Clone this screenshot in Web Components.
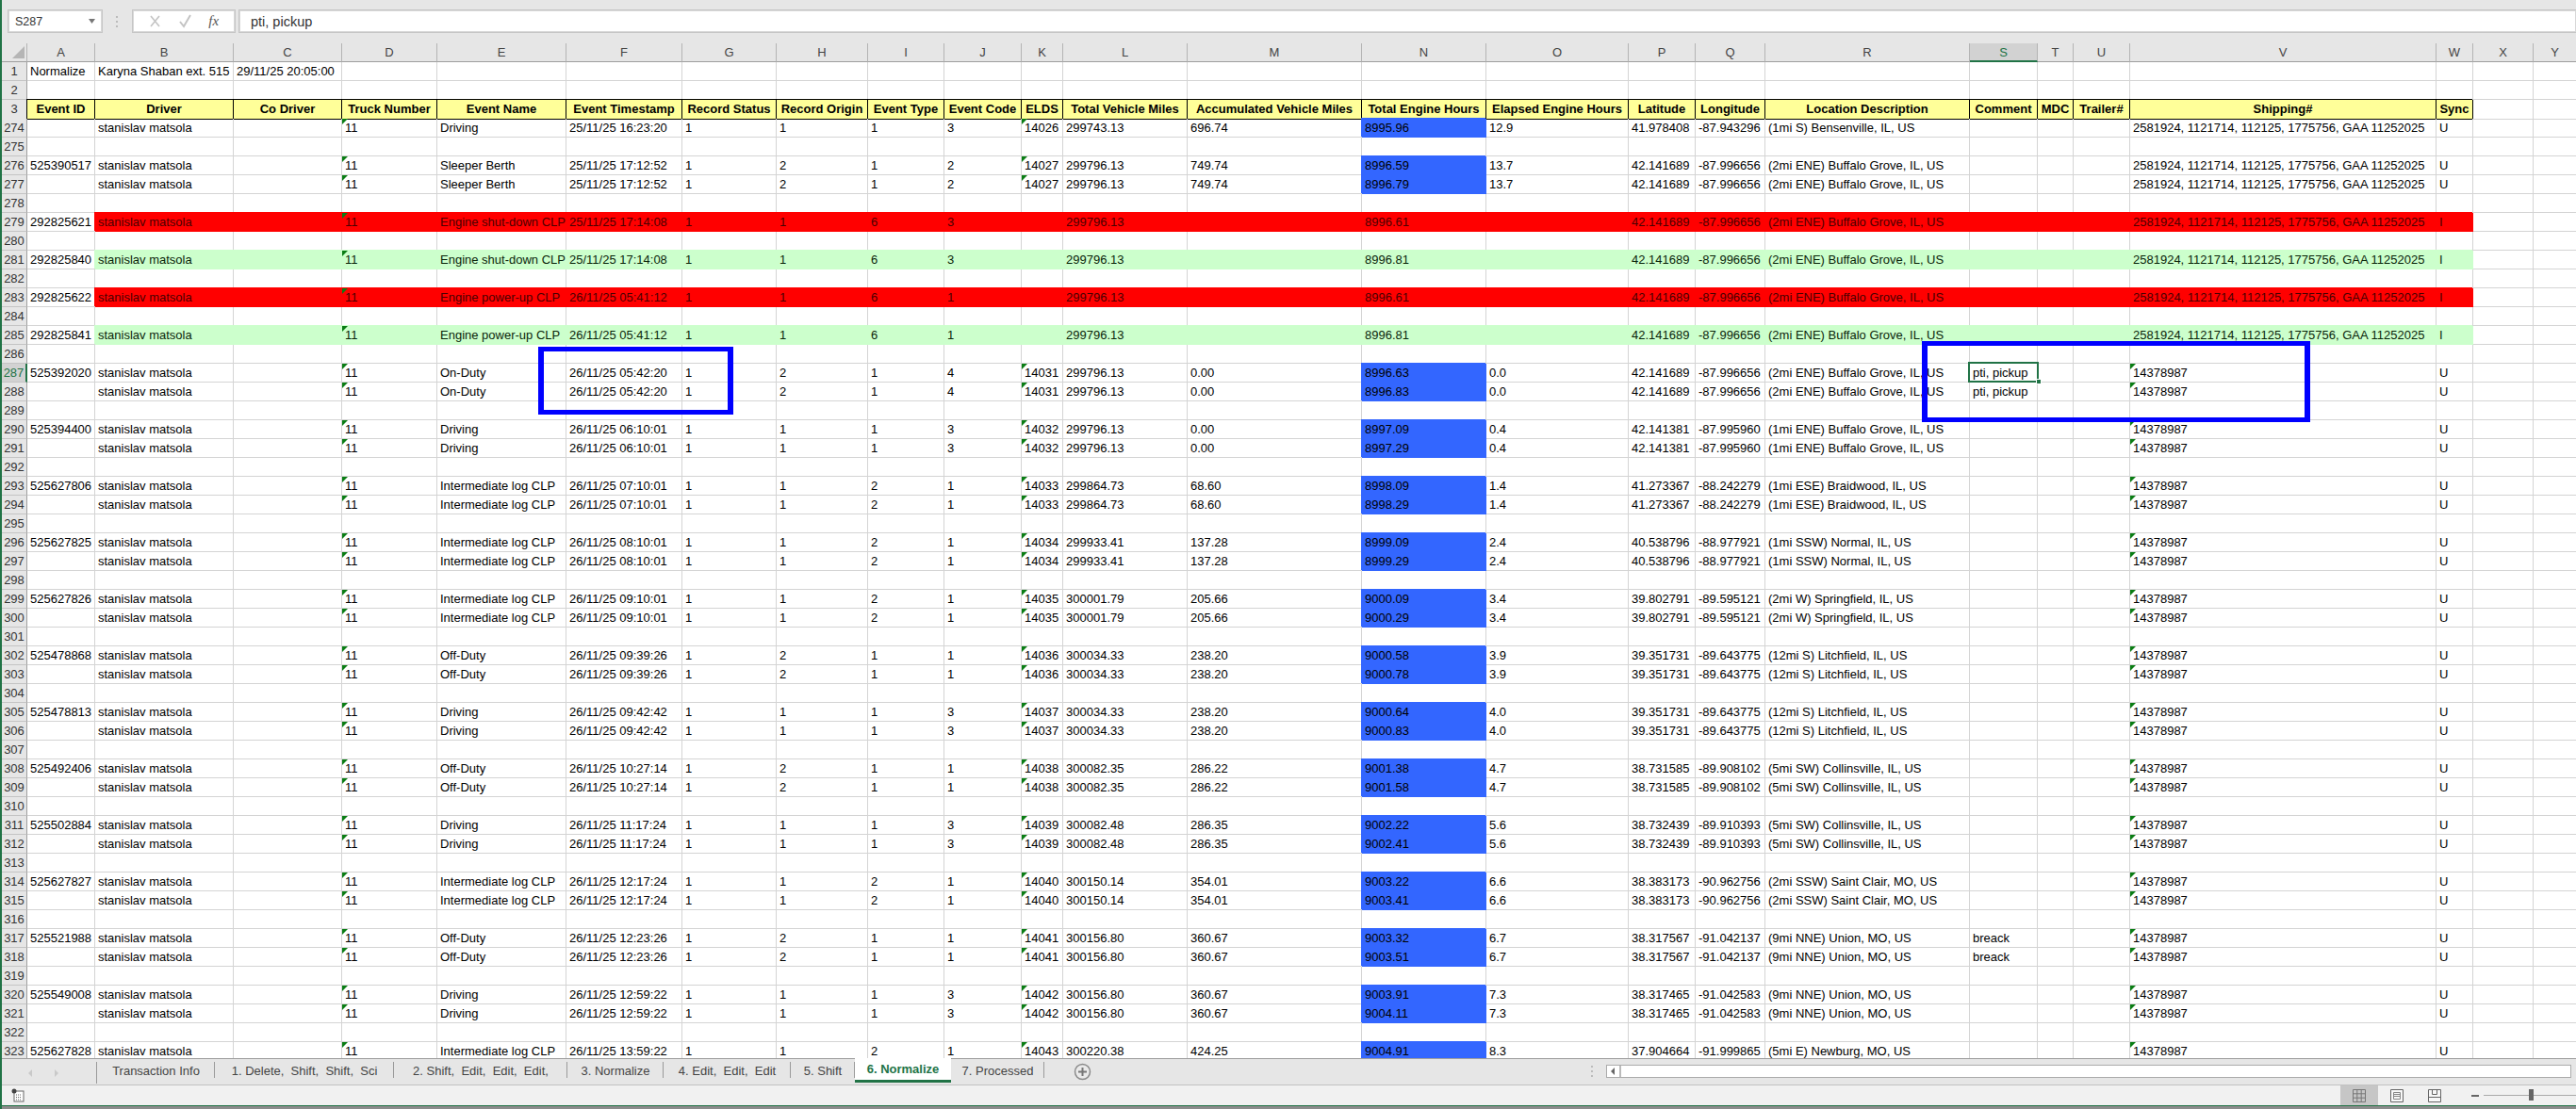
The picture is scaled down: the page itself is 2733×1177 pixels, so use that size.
<!DOCTYPE html>
<html><head><meta charset="utf-8"><title>Normalize</title>
<style>
html,body{margin:0;padding:0;background:#fff;overflow:hidden}
body{font-family:"Liberation Sans",Arial,sans-serif;font-size:13px;color:#000;
--cols:27px 72px 147px 115px 101px 137px 123px 100px 97px 81px 82px 44px 132px 185px 132px 151px 71px 74px 217px 72px 38px 60px 325px 39px 64px 46px;}
</style></head><body>
<x-app>
<x-formula-bar slot="top" name="S287" value="pti, pickup"></x-formula-bar>
<x-sheet slot="sheet" id="sheet">
  <x-mark style="left:569px;top:322px;width:195px;height:62px"></x-mark>
  <x-mark style="left:2037px;top:316px;width:400px;height:76px"></x-mark>
</x-sheet>
<x-tabbar slot="tabs">
  <x-tab w="125">Transaction Info</x-tab>
  <x-tab w="190">1. Delete,  Shift,  Shift,  Sci</x-tab>
  <x-tab w="184">2. Shift,  Edit,  Edit,  Edit,</x-tab>
  <x-tab w="102">3. Normalize</x-tab>
  <x-tab w="135">4. Edit,  Edit,  Edit</x-tab>
  <x-tab w="68">5. Shift</x-tab>
  <x-tab w="102" active>6. Normalize</x-tab>
  <x-tab w="99">7. Processed</x-tab>
</x-tabbar>
<x-statusbar slot="status"></x-statusbar>
</x-app>
<script>
function def(name,css,html,extra){
  const C=class extends HTMLElement{
    constructor(){super();const r=this.attachShadow({mode:'open'});r.innerHTML='<style>'+css+'</style>'+html;}
  };
  if(extra)extra(C);
  customElements.define(name,C);
}
def('x-app',`:host{display:flex;flex-direction:column;width:2733px;height:1177px;box-sizing:border-box;border-left:2px solid #217346;background:#e6e6e6;overflow:hidden}
.g{height:1px;background:#217346;flex:none}.b{height:3px;background:#8c8c8c;flex:none}`,
`<slot name="top"></slot><slot name="sheet"></slot><slot name="tabs"></slot><slot name="status"></slot><div class="g"></div><div class="b"></div>`);

customElements.define('x-formula-bar',class extends HTMLElement{
  connectedCallback(){
    const r=this.attachShadow({mode:'open'});
    r.innerHTML=`<style>
    :host{display:flex;height:46px;box-sizing:border-box;padding:10px 0 11px 6px;background:#e6e6e6;align-items:stretch;flex:none;font-family:"Liberation Sans",Arial,sans-serif}
    .box{background:#fff;border:1px solid #c6c6c6;box-shadow:inset 0 0 0 1px #d8d8d8;box-sizing:border-box;display:flex;align-items:center}
    .name{width:101px;padding:0 6px 0 7px;font-size:12.5px;color:#333;justify-content:space-between}
    .dots{width:31px;display:flex;align-items:center;justify-content:center}
    .fn{width:110px;justify-content:space-around;padding:0 8px;}
    .fx{font:italic 15px "Liberation Serif",serif;color:#555}
    .val{flex:1;margin-left:3px;border-right:none;padding-left:12px;font-size:14.5px;color:#333}
    </style>
    <div class="box name"><span>${this.getAttribute('name')}</span><svg width="8" height="6"><path d="M0 0h7L3.500 5z" fill="#777"/></svg></div>
    <div class="dots"><svg width="3" height="13"><g fill="#bbb"><rect width="2" height="2" y="1"/><rect width="2" height="2" y="6"/><rect width="2" height="2" y="11"/></g></svg></div>
    <div class="box fn"><svg width="13" height="15"><path d="M2 2l9 11M11 2L2 13" stroke="#c4c4c4" stroke-width="1.600" fill="none"/></svg><svg width="15" height="15"><path d="M2 8l4 5 7-12" stroke="#c4c4c4" stroke-width="2" fill="none"/></svg><span class="fx">fx</span></div>
    <div class="box val">${this.getAttribute('value')}</div>`;
  }
});

def('x-sheet',`:host{display:block;position:relative;height:1077px;overflow:hidden;background:#fff;flex:none}`,`<slot></slot>`);

def('x-col-head',`:host{display:grid;grid-template-columns:var(--cols);height:20px;background:#e6e6e6;font:13px/20px "Liberation Sans",Arial,sans-serif;color:#444}
div{box-sizing:border-box;text-align:center;border-right:1px solid #b4b4b4;border-bottom:1px solid #9e9e9e;overflow:hidden}
.c{background:#e6e6e6}
.c0{position:relative}
.c0 svg{position:absolute;left:10px;top:2px}
.sel{background:#d2d2d2;color:#217346;border-bottom:2px solid #217346}`,'',C=>{
  const p=C.prototype;
  p.connectedCallback=function(){
    const L='ABCDEFGHIJKLMNOPQRSTUVWXY'.split('');
    let h='<div class="c0"><svg width="15" height="15"><path d="M14 1v13H1z" fill="#b5b5b5"/></svg></div>';
    L.forEach(l=>h+='<div class="'+(l==='S'?'sel':'')+'">'+l+'</div>');
    const d=document.createElement('template');d.innerHTML=h;this.shadowRoot.appendChild(d.content);
  };
});

const rowCss=`:host{display:grid;grid-template-columns:var(--cols);height:20px;font:13px/19px "Liberation Sans",Arial,sans-serif;color:#000}
.c{box-sizing:border-box;border-right:1px solid #d4d4d4;border-bottom:1px solid #d4d4d4;padding-left:3px;white-space:pre;position:relative;min-width:0}
.rh{background:#e6e6e6;border-right:1px solid #9e9e9e;border-bottom:1px solid #c4c4c4;padding:0;text-align:center;color:#333;line-height:20px;overflow:hidden}
.rh.sel{background:#d2d2d2;color:#217346;border-right:2px solid #217346}
.h{background:#ff9;border-right:1px solid #000;border-bottom:1px solid #000;box-shadow:-1px -1px 0 #000;font-weight:bold;text-align:center;padding:0;line-height:20px}
.red{background:#f00;border-color:#f00;box-shadow:-1px -1px 0 #f00;color:#4a0000}
.grn{background:#cfc;border-color:#cfc;box-shadow:-1px -1px 0 #cfc;color:#0a250a}
.blu{background:#36f;border-color:#36f;box-shadow:-1px -1px 0 #36f}
.t::before{content:"";position:absolute;left:0;top:0;border-top:6px solid #0a7d14;border-right:6px solid transparent}
.cur::after{content:"";position:absolute;left:-2px;top:-2px;width:71px;height:18px;border:2px solid #217346;z-index:2}
.hd{position:absolute;left:70px;top:16px;width:4px;height:4px;background:#217346;border:1px solid #fff;z-index:3}
`;
customElements.define('x-row',class extends HTMLElement{
  constructor(){super();this.attachShadow({mode:'open'});}
  set data(d){
    const cols=25;
    let h='<style>'+rowCss+'</style><div class="c rh'+(d.num===287?' sel':'')+'">'+d.num+'</div>';
    for(let i=0;i<cols;i++){
      const v=(d.v&&d.v[i])||'';
      const cls=['c'];
      if(d.hdr&&i<23)cls.push('h');
      if(d.fill&&i>=1&&i<23)cls.push(d.fill);
      if(d.blue&&i===13)cls.push('blu');
      if(d.tri&&((i===3&&v)||(i===10&&v)||(i===21&&v==='14378987')))cls.push('t');
      if(d.num===287&&i===18)cls.push('cur');
      const hd=(d.num===287&&i===18)?'<span class="hd"></span>':'';
      h+='<div class="'+cls.join(' ')+'">'+v.replace(/&/g,'&amp;')+hd+'</div>';
    }
    this.shadowRoot.innerHTML=h;
  }
});

def('x-mark',`:host{display:block;position:absolute;box-sizing:content-box;border:5px solid #00f;border-width:5px 6px;z-index:5;pointer-events:none}`,'');

customElements.define('x-tab',class extends HTMLElement{
  constructor(){super();this.attachShadow({mode:'open'});}
  connectedCallback(){
    this.shadowRoot.innerHTML=`<style>
    :host{display:flex;flex:none;box-sizing:border-box;width:${this.getAttribute('w')}px;align-items:center;justify-content:center;white-space:pre;font:13px "Liberation Sans",Arial,sans-serif;color:#444;position:relative}
    :host(:not([active]))::after{content:"";position:absolute;right:0;top:3px;bottom:4px;width:1px;background:#9a9a9a}
    :host([active]){background:#fff;color:#217346;font-weight:bold;border-bottom:3px solid #217346;margin-top:-1px;height:26px;}
    </style><slot></slot>`;
  }
});

def('x-tabbar',`:host{display:flex;height:29px;box-sizing:border-box;border-top:1px solid #9e9e9e;border-bottom:1px solid #c2c2c2;background:#e6e6e6;align-items:flex-start;flex:none}
.nav{width:101px;height:23px;box-sizing:border-box;display:flex;align-items:center;gap:22px;padding-left:27px;position:relative;flex:none;margin-top:3px}
.nav::after{content:"";position:absolute;right:0;top:0;bottom:0;width:1px;background:#9a9a9a}
.tabs{display:flex;height:24px;}
.plus{margin:4px 0 0 31px;flex:none}
.dots{margin:6px 14px 0 auto;flex:none}
.sb{flex:none;width:1024px;height:14px;margin:6px 5px 0 0;box-sizing:border-box;border:1px solid #ababab;background:#fff;display:flex}
.sb i{display:flex;width:13px;border-right:2px solid #bbb;align-items:center;justify-content:center}`,
`<div class="nav"><svg width="6" height="10"><path d="M5 1v8L1 5z" fill="#c9c9c9"/></svg><svg width="6" height="10"><path d="M1 1v8l4-4z" fill="#c9c9c9"/></svg></div>
<div class="tabs"><slot></slot></div>
<svg class="plus" width="19" height="19"><circle cx="9.500" cy="9.500" r="8" fill="#eaeaea" stroke="#8a8a8a" stroke-width="1.500"/><path d="M9.500 5v9M5 9.500h9" stroke="#777" stroke-width="2"/></svg>
<svg class="dots" width="2" height="15"><g fill="#bbb"><rect width="2" height="2" y="1"/><rect width="2" height="2" y="6"/><rect width="2" height="2" y="11"/></g></svg>
<div class="sb"><i><svg width="5" height="8"><path d="M4 0v8L0 4z" fill="#666"/></svg></i></div>`);

def('x-statusbar',`:host{display:flex;height:21px;background:#f1f1f1;align-items:center;flex:none;position:relative}
.mac{margin-left:9px;flex:none}
.view{margin-left:auto;display:flex;align-items:center;height:21px}
.v{width:40px;height:21px;display:flex;align-items:center;justify-content:center}
.v.on{background:#c6c6c6}
.minus{width:8px;height:2px;background:#666;margin:0 5px 0 19px}
.track{width:98px;height:1px;background:#aaa;position:relative;flex:none}
.track b{position:absolute;left:48px;top:-6px;width:5px;height:12px;background:#666}`,
`<svg class="mac" width="15" height="15"><rect x="4" y="3" width="10" height="11" fill="#fff" stroke="#666"/><circle cx="4" cy="3" r="2.500" fill="#444"/><path d="M6 7h6M6 9.500h6M6 12h6" stroke="#666" stroke-dasharray="1 1"/></svg>
<div class="view">
<div class="v on"><svg width="14" height="14"><path d="M.5.500h13v13H.5zM.5 4.800h13M.5 9.200h13M4.800.500v13M9.200.500v13" fill="none" stroke="#777"/></svg></div>
<div class="v"><svg width="14" height="14"><path d="M.5.500h13v13H.5z" fill="#f8f8f8" stroke="#666"/><path d="M3.500 3.500h7v7h-7zM4 5.500h6M4 7.500h6" fill="none" stroke="#888"/></svg></div>
<div class="v"><svg width="14" height="14"><path d="M.5.500h13v13H.5z" fill="#f8f8f8" stroke="#666"/><path d="M4.500.500v5h5v-5M.5 8.500h13" fill="none" stroke="#666"/></svg></div>
<div class="minus"></div><div class="track"><b></b></div></div>`);

/* ----- data ----- */
const DR='stanislav matsola';
const SHIP='2581924, 1121714, 112125, 1775756, GAA 11252025', PRO='14378987';
const rows=new Map();
rows.set(1,{v:['Normalize','Karyna Shaban ext. 515','29/11/25 20:05:00']});
rows.set(2,{});
rows.set(3,{hdr:1,v:['Event ID','Driver','Co Driver','Truck Number','Event Name','Event Timestamp','Record Status','Record Origin','Event Type','Event Code','ELDS','Total Vehicle Miles','Accumulated Vehicle Miles','Total Engine Hours','Elapsed Engine Hours','Latitude','Longitude','Location Description','Comment','MDC','Trailer#','Shipping#','Sync']});
function R(num,id,ev,ts,g,h,i,j,k,l,m,n,o,p,q,loc,com,ship,sync,opt){
  rows.set(num,Object.assign({tri:1,blue:!!o,v:[id,DR,'','11',ev,ts,g,h,i,j,k,l,m,n,o,p,q,loc,com,'','',ship,sync]},opt||{}));
}
const BG='(2mi ENE) Buffalo Grove, IL, US';
R(274,'','Driving','25/11/25 16:23:20','1','1','1','3','14026','299743.13','696.74','8995.96','12.9','41.978408','-87.943296','(1mi S) Bensenville, IL, US','',SHIP,'U');
R(276,'525390517','Sleeper Berth','25/11/25 17:12:52','1','2','1','2','14027','299796.13','749.74','8996.59','13.7','42.141689','-87.996656',BG,'',SHIP,'U');
R(277,'','Sleeper Berth','25/11/25 17:12:52','1','2','1','2','14027','299796.13','749.74','8996.79','13.7','42.141689','-87.996656',BG,'',SHIP,'U');
R(279,'292825621','Engine shut-down CLP','25/11/25 17:14:08','1','1','6','3','','299796.13','','8996.61','','42.141689','-87.996656',BG,'',SHIP,'I',{fill:'red'});
R(281,'292825840','Engine shut-down CLP','25/11/25 17:14:08','1','1','6','3','','299796.13','','8996.81','','42.141689','-87.996656',BG,'',SHIP,'I',{fill:'grn'});
R(283,'292825622','Engine power-up CLP','26/11/25 05:41:12','1','1','6','1','','299796.13','','8996.61','','42.141689','-87.996656',BG,'',SHIP,'I',{fill:'red'});
R(285,'292825841','Engine power-up CLP','26/11/25 05:41:12','1','1','6','1','','299796.13','','8996.81','','42.141689','-87.996656',BG,'',SHIP,'I',{fill:'grn'});
function P(a,id,ev,t,g,h,i,j,k,l,m,n1,n2,o,p,q,loc,com){
  [[a,id,n1],[a+1,'',n2]].forEach(x=>R(x[0],x[1],ev,'26/11/25 '+t,g,h,i,j,k,l,m,x[2],o,p,q,loc,com||'',PRO,'U'));
}
const IL='Intermediate log CLP';
P(287,'525392020','On-Duty','05:42:20','1','2','1','4','14031','299796.13','0.00','8996.63','8996.83','0.0','42.141689','-87.996656',BG,'pti, pickup');
P(290,'525394400','Driving','06:10:01','1','1','1','3','14032','299796.13','0.00','8997.09','8997.29','0.4','42.141381','-87.995960','(1mi ENE) Buffalo Grove, IL, US');
P(293,'525627806',IL,'07:10:01','1','1','2','1','14033','299864.73','68.60','8998.09','8998.29','1.4','41.273367','-88.242279','(1mi ESE) Braidwood, IL, US');
P(296,'525627825',IL,'08:10:01','1','1','2','1','14034','299933.41','137.28','8999.09','8999.29','2.4','40.538796','-88.977921','(1mi SSW) Normal, IL, US');
P(299,'525627826',IL,'09:10:01','1','1','2','1','14035','300001.79','205.66','9000.09','9000.29','3.4','39.802791','-89.595121','(2mi W) Springfield, IL, US');
P(302,'525478868','Off-Duty','09:39:26','1','2','1','1','14036','300034.33','238.20','9000.58','9000.78','3.9','39.351731','-89.643775','(12mi S) Litchfield, IL, US');
P(305,'525478813','Driving','09:42:42','1','1','1','3','14037','300034.33','238.20','9000.64','9000.83','4.0','39.351731','-89.643775','(12mi S) Litchfield, IL, US');
P(308,'525492406','Off-Duty','10:27:14','1','2','1','1','14038','300082.35','286.22','9001.38','9001.58','4.7','38.731585','-89.908102','(5mi SW) Collinsville, IL, US');
P(311,'525502884','Driving','11:17:24','1','1','1','3','14039','300082.48','286.35','9002.22','9002.41','5.6','38.732439','-89.910393','(5mi SW) Collinsville, IL, US');
P(314,'525627827',IL,'12:17:24','1','1','2','1','14040','300150.14','354.01','9003.22','9003.41','6.6','38.383173','-90.962756','(2mi SSW) Saint Clair, MO, US');
P(317,'525521988','Off-Duty','12:23:26','1','2','1','1','14041','300156.80','360.67','9003.32','9003.51','6.7','38.317567','-91.042137','(9mi NNE) Union, MO, US','breack');
P(320,'525549008','Driving','12:59:22','1','1','1','3','14042','300156.80','360.67','9003.91','9004.11','7.3','38.317465','-91.042583','(9mi NNE) Union, MO, US');
R(323,'525627828',IL,'26/11/25 13:59:22','1','1','2','1','14043','300220.38','424.25','9004.91','8.3','37.904664','-91.999865','(5mi E) Newburg, MO, US','',PRO,'U');

const sheet=document.getElementById('sheet');
const first=sheet.firstElementChild;
sheet.insertBefore(document.createElement('x-col-head'),first);
const nums=[1,2,3];for(let n=274;n<=323;n++)nums.push(n);
nums.forEach(n=>{
  const el=document.createElement('x-row');
  el.data=Object.assign({num:n},rows.get(n)||{});
  sheet.insertBefore(el,first);
});
</script>
</body></html>
